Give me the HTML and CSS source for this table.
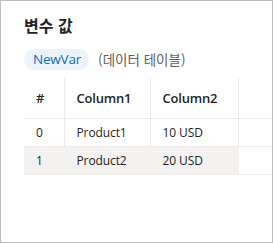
FILE: index.html
```html
<!DOCTYPE html>
<html lang="ko">
<head>
<meta charset="utf-8">
<link rel="stylesheet" href="styles.css">
</head>
<body>
<div class="frame">
  <h1 class="title">변수 값</h1>
  <div class="meta">
    <span class="pill">NewVar</span>
    <span class="kind">(데이터 테이블)</span>
  </div>
  <table class="grid">
    <colgroup>
      <col class="c-idx"><col class="c-1"><col class="c-2"><col class="c-rest">
    </colgroup>
    <thead>
      <tr><th>#</th><th>Column1</th><th>Column2</th><th class="empty"></th></tr>
    </thead>
    <tbody>
      <tr><td>0</td><td>Product1</td><td>10 USD</td><td class="empty"></td></tr>
      <tr class="hover"><td>1</td><td>Product2</td><td>20 USD</td><td class="empty"></td></tr>
    </tbody>
  </table>
</div>
</body>
</html>
```
FILE: styles.css
```css
* { box-sizing: border-box; }
html, body { margin: 0; padding: 0; background: #fff; }
body {
  font-family: "Open Sans", "Noto Sans CJK KR", sans-serif;
  color: #242424;
}
.frame {
  width: 273px;
  height: 243px;
  border: 1px solid #bdbdbd;
  overflow: hidden;
  padding: 13px 0 0 23px;
}
.title {
  margin: 0;
  font-family: "Noto Sans CJK KR", sans-serif;
  font-size: 16px;
  font-weight: 700;
  line-height: 22px;
}
.meta {
  margin-top: 13px;
  display: flex;
  align-items: center;
  gap: 9px;
  height: 21px;
}
.pill {
  background: #ebf3fc;
  color: #0f6cbd;
  font-size: 13.5px;
  letter-spacing: -0.2px;
  line-height: 21px;
  height: 21px;
  padding: 0 8px 0 9px;
  border-radius: 11px;
}
.kind {
  font-family: "Noto Sans CJK KR", sans-serif;
  font-size: 13.5px;
  color: #616161;
  line-height: 21px;
}
.grid {
  margin-top: 8px;
  border-collapse: collapse;
  table-layout: fixed;
  width: 260px;
  font-size: 12px;
}
.c-idx { width: 40px; }
.c-1 { width: 86px; }
.c-2 { width: 88px; }
.c-rest { width: 46px; }
th, td {
  text-align: left;
  padding: 0 0 0 12px;
  border-right: 1px solid #edebe9;
  border-bottom: 1px solid #edebe9;
  white-space: nowrap;
}
th {
  height: 40px;
  font-size: 13px;
  font-weight: 600;
  letter-spacing: -0.2px;
}
td { height: 28px; letter-spacing: -0.1px; }
.hover td { background: #f3f2f1; border-right-color: #f3f2f1; }
.hover td.empty { background: #fff; border-left: 1px solid #edebe9; }
```
